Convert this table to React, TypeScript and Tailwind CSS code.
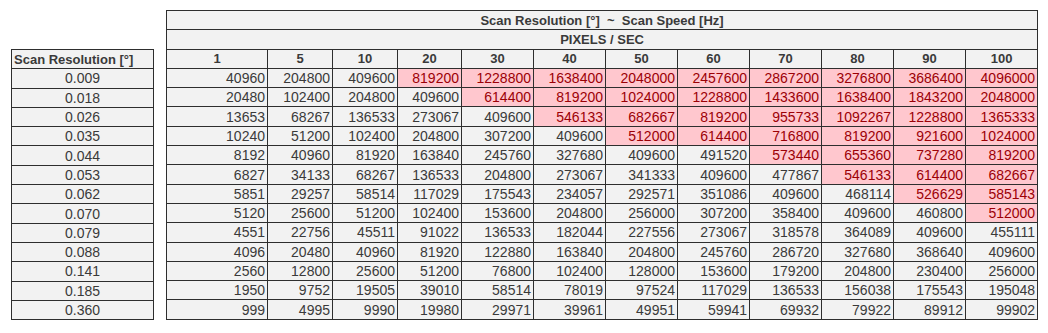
import React from 'react';

const speeds: number[] = [1, 5, 10, 20, 30, 40, 50, 60, 70, 80, 90, 100];
const colWidths: number[] = [101, 65, 65, 64, 72, 72, 72, 72, 72, 72, 72, 72];

const rows: { res: string; values: number[] }[] = [
  { res: '0.009', values: [40960, 204800, 409600, 819200, 1228800, 1638400, 2048000, 2457600, 2867200, 3276800, 3686400, 4096000] },
  { res: '0.018', values: [20480, 102400, 204800, 409600, 614400, 819200, 1024000, 1228800, 1433600, 1638400, 1843200, 2048000] },
  { res: '0.026', values: [13653, 68267, 136533, 273067, 409600, 546133, 682667, 819200, 955733, 1092267, 1228800, 1365333] },
  { res: '0.035', values: [10240, 51200, 102400, 204800, 307200, 409600, 512000, 614400, 716800, 819200, 921600, 1024000] },
  { res: '0.044', values: [8192, 40960, 81920, 163840, 245760, 327680, 409600, 491520, 573440, 655360, 737280, 819200] },
  { res: '0.053', values: [6827, 34133, 68267, 136533, 204800, 273067, 341333, 409600, 477867, 546133, 614400, 682667] },
  { res: '0.062', values: [5851, 29257, 58514, 117029, 175543, 234057, 292571, 351086, 409600, 468114, 526629, 585143] },
  { res: '0.070', values: [5120, 25600, 51200, 102400, 153600, 204800, 256000, 307200, 358400, 409600, 460800, 512000] },
  { res: '0.079', values: [4551, 22756, 45511, 91022, 136533, 182044, 227556, 273067, 318578, 364089, 409600, 455111] },
  { res: '0.088', values: [4096, 20480, 40960, 81920, 122880, 163840, 204800, 245760, 286720, 327680, 368640, 409600] },
  { res: '0.141', values: [2560, 12800, 25600, 51200, 76800, 102400, 128000, 153600, 179200, 204800, 230400, 256000] },
  { res: '0.185', values: [1950, 9752, 19505, 39010, 58514, 78019, 97524, 117029, 136533, 156038, 175543, 195048] },
  { res: '0.360', values: [999, 4995, 9990, 19980, 29971, 39961, 49951, 59941, 69932, 79922, 89912, 99902] },
];

// anything above this many pixels/sec is flagged red
const LIMIT = 500000;

const cell = 'h-[19.3px] border border-[#2e2e2e] p-0 leading-none';

const App: React.FC = () => {
  return (
    <div className="flex h-[333px] w-[1048px] items-start gap-[12px] bg-white pl-[11px] pt-[10px] font-['Liberation_Sans',sans-serif] text-[#3a3a3a]">
      <table className="mt-[39px] w-[143px] table-fixed border-collapse bg-[#f2f2f2]">
        <thead>
          <tr>
            <th className={`${cell} pl-[2px] text-left text-[13px] font-bold`}>Scan Resolution [°]</th>
          </tr>
        </thead>
        <tbody>
          {rows.map((row) => (
            <tr key={row.res}>
              <td className={`${cell} text-center text-[14px]`}>{row.res}</td>
            </tr>
          ))}
        </tbody>
      </table>

      <table className="w-[871px] table-fixed border-collapse bg-[#f2f2f2]">
        <colgroup>
          {colWidths.map((w, i) => (
            <col key={i} style={{ width: w }} />
          ))}
        </colgroup>
        <thead>
          <tr>
            <th colSpan={12} className={`${cell} text-center text-[13px] font-bold`}>
              Scan Resolution [°]&nbsp;&nbsp;~&nbsp;&nbsp;Scan Speed [Hz]
            </th>
          </tr>
          <tr>
            <th colSpan={12} className={`${cell} text-center text-[13px] font-bold`}>
              PIXELS / SEC
            </th>
          </tr>
          <tr>
            {speeds.map((s) => (
              <th key={s} className={`${cell} text-center text-[13px] font-bold`}>
                {s}
              </th>
            ))}
          </tr>
        </thead>
        <tbody>
          {rows.map((row) => (
            <tr key={row.res}>
              {row.values.map((v, i) => (
                <td
                  key={i}
                  className={`${cell} pr-[2px] text-right text-[14px] ${
                    v > LIMIT ? 'bg-[#ffc7ce] text-[#9c0006]' : ''
                  }`}
                >
                  {v}
                </td>
              ))}
            </tr>
          ))}
        </tbody>
      </table>
    </div>
  );
};

export default App;
